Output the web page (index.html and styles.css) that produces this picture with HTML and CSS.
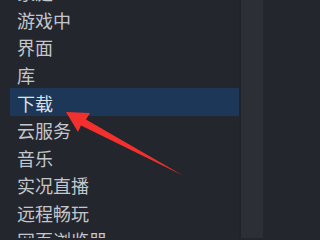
FILE: index.html
```html
<!DOCTYPE html>
<html lang="zh-CN">
<head>
<meta charset="utf-8">
<link rel="stylesheet" href="styles.css">
</head>
<body>
<div class="window">
  <nav class="sidebar">
    <ul class="menu">
      <li class="item">家庭</li>
      <li class="item">游戏中</li>
      <li class="item">界面</li>
      <li class="item">库</li>
      <li class="item active">下载</li>
      <li class="item">云服务</li>
      <li class="item">音乐</li>
      <li class="item">实况直播</li>
      <li class="item">远程畅玩</li>
      <li class="item">网页浏览器</li>
    </ul>
  </nav>
  <div class="divider"></div>
  <main class="content"></main>
  <svg class="arrow" width="263" height="238" viewBox="0 0 263 238">
    <polygon points="66,112 90,113 86,119.5 183,175.5 81,125.5 78,132" fill="#f2302e"/>
  </svg>
</div>
</body>
</html>
```
FILE: styles.css
```css
html, body {
  margin: 0;
  padding: 0;
  background: #23262c;
}
.window {
  position: relative;
  display: flex;
  width: 263px;
  height: 238px;
  overflow: hidden;
}
.sidebar {
  width: 239px;
  background: #23262c;
  padding-left: 10px;
  box-sizing: border-box;
}
.menu {
  list-style: none;
  margin: -22px 0 0 0;
  padding: 0;
}
.item {
  height: 27.5px;
  line-height: 27.5px;
  padding: 1px 0 0 7px;
  box-sizing: border-box;
  font-family: "Noto Sans CJK SC", "Noto Sans", sans-serif;
  font-size: 18px;
  color: #c3c7cd;
  white-space: nowrap;
}
.item.active {
  background: #1c3758;
  color: #dde2e8;
  height: 28px;
  line-height: 28px;
}
.divider {
  width: 2px;
  background: #202328;
}
.content {
  flex: 1;
  background: #2c2f36;
}
.arrow {
  position: absolute;
  left: 0;
  top: 0;
  pointer-events: none;
}
```
